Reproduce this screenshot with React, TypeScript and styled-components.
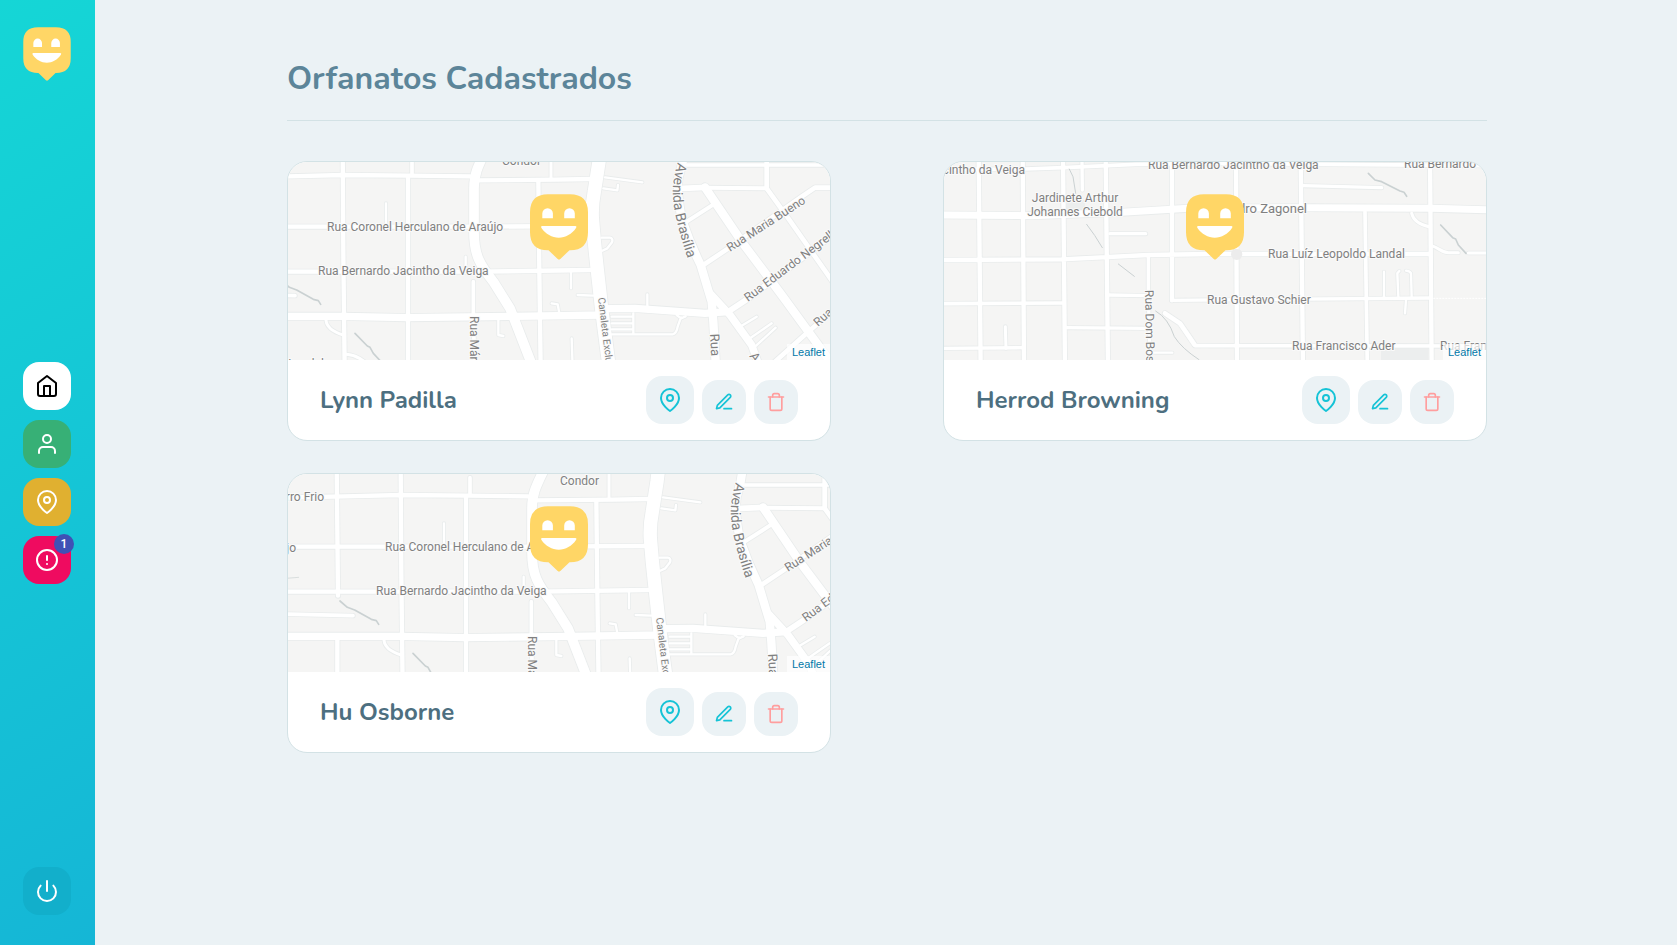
import React from 'react';
import styled, { createGlobalStyle } from 'styled-components';
import {
  FiAlertCircle,
  FiEdit3,
  FiHome,
  FiMapPin,
  FiPower,
  FiTrash,
  FiUser,
} from 'react-icons/fi';

const GlobalStyle = createGlobalStyle`
  * {
    margin: 0;
    padding: 0;
    box-sizing: border-box;
  }

  body {
    background: #ebf2f5;
    color: #4d6f80;
    font-family: Nunito, Lato, 'Open Sans', sans-serif;
  }

  button {
    font: inherit;
    border: 0;
    cursor: pointer;
  }
`;

const Sidebar = styled.aside`
  position: fixed;
  top: 0;
  bottom: 0;
  left: 0;
  width: 95px;
  padding: 27px 24px 30px 23px;
  display: flex;
  flex-direction: column;
  justify-content: space-between;
  background: linear-gradient(329.54deg, #15b6d6 0%, #15d6d6 100%);
`;

const LogoLink = styled.a`
  display: block;
  height: 52px;
`;

const Nav = styled.nav`
  display: flex;
  flex-direction: column;
  gap: 10px;
`;

const NavButton = styled.button<{ $background: string; $color?: string }>`
  position: relative;
  width: 48px;
  height: 48px;
  display: flex;
  align-items: center;
  justify-content: center;
  border-radius: 16px;
  background: ${({ $background }) => $background};
  color: ${({ $color }) => $color ?? '#fff'};
`;

const Badge = styled.span`
  position: absolute;
  top: -2px;
  right: -3px;
  width: 20px;
  height: 20px;
  border-radius: 10px;
  background: #3f51b5;
  color: #fff;
  font: 500 12px/20px Roboto, sans-serif;
  text-align: center;
`;

const Main = styled.main`
  margin-left: 97px;
  padding: 56px 24px 32px;
`;

const Content = styled.div`
  max-width: 1200px;
  margin: 0 auto;
`;

const PageTitle = styled.h1`
  padding-bottom: 18px;
  margin-bottom: 40px;
  border-bottom: 1px solid #d3e2e5;
  color: #5c8599;
  font-size: 32px;
  line-height: 46px;
  font-weight: 700;
`;

const CardGrid = styled.div`
  display: grid;
  grid-template-columns: 1fr 1fr;
  gap: 32px 112px;
`;

const Card = styled.article`
  overflow: hidden;
  border: 1px solid #d3e2e5;
  border-radius: 20px;
  background: #fff;
`;

const MapFrame = styled.div`
  position: relative;
  height: 198px;
  background: #f5f5f4;
`;

const MapDrawing = styled.svg`
  display: block;
  width: 100%;
  height: 100%;

  text {
    font-family: Roboto, sans-serif;
    fill: #808080;
    stroke: #fafafa;
    stroke-width: 2px;
    paint-order: stroke;
  }
`;

const Pin = styled.div`
  position: absolute;
  top: 32px;
  left: 50%;
  width: 58px;
  height: 66px;
  transform: translateX(-50%);
`;

const Attribution = styled.a`
  position: absolute;
  right: 0;
  bottom: 0;
  padding: 0 5px;
  background: rgba(255, 255, 255, 0.7);
  color: #0078a8;
  font: 11px/16px 'Liberation Sans', Arial, sans-serif;
  text-decoration: none;
`;

const CardFooter = styled.footer`
  height: 80px;
  padding: 0 32px;
  display: flex;
  align-items: center;
  justify-content: space-between;
`;

const CardName = styled.h2`
  color: #4d6f80;
  font-size: 24px;
  line-height: 32px;
  font-weight: 700;
`;

const Actions = styled.div`
  display: flex;
  align-items: flex-end;
  gap: 8px;
`;

const ActionButton = styled.button<{ $size: number; $color: string }>`
  width: ${({ $size }) => $size}px;
  height: ${({ $size }) => $size}px;
  display: flex;
  align-items: center;
  justify-content: center;
  border-radius: 16px;
  background: #ebf2f5;
  color: ${({ $color }) => $color};
`;

function HappyMark({ width, height }: { width: number; height: number }) {
  return (
    <svg width={width} height={height} viewBox="0 0 58 66" aria-hidden="true">
      <path
        fill="#ffd666"
        d="M18 0.200H40Q58 0.200 58 18.200V38.200Q58 56.200 40 56.200H39.500L30.300 65Q29 66.200 27.700 65L18.500 56.200H18Q0 56.200 0 38.200V18.200Q0 0.200 18 0.200Z"
      />
      <path
        fill="#fff"
        d="M12.300 24.300V19.500a5.300 5.300 0 0 1 10.600 0V24.300ZM34.200 24.300V19.500a5.300 5.300 0 0 1 10.600 0V24.300ZM12.200 31.900H45.300Q47.100 32 46 34C42 40 35.500 43.700 28.800 43.700S15.500 40 11.500 34Q10.400 32 12.200 31.900Z"
      />
    </svg>
  );
}

interface Road {
  w: number;
  d: string;
}

interface Label {
  x: number;
  y: number;
  text: string;
  size?: number;
  rotate?: number;
  anchor?: 'start' | 'middle' | 'end';
}

/* Roads are plotted at three units to a pixel. */
const MAP_SCALE = 1 / 3;

const bigorrilhoRoads: Road[] = [
  { w: 7, d: 'M318 145V205M557 305V345M655 495V540L670 543M815 445L833 448L838 475M875 550L878 640M873 350V400M893 420L940 422' },
  { w: 7, d: 'M975 67L1087 82M970 100L1012 106L1014 90M965 248H990Q1000 250 996 262L982 280L965 288M1102 418V460' },
  { w: 7, d: 'M995 485H1057M995 505H1057M995 523H1057M1060 475V538M995 538H1178Q1190 535 1193 515L1203 487M1190 480L1203 490L1217 484' },
  { w: 7, d: 'M1380 515L1430 485M1410 550L1475 505M1425 575L1487 518' },
  { w: 9, d: 'M138 495Q140 525 190 540M200 598Q230 600 260 625M813 -30V68' },
  { w: 11, d: 'M-174 417L45 422M396 8V60M580 380V480L584 640M1220 30H1690' },
  { w: 13, d: 'M-174 68L20 64L190 60L390 62L570 64M590 76L825 74L930 72' },
  { w: 13, d: 'M-174 215H582L920 213M-174 350H600L930 345' },
  { w: 13, d: 'M188 -30L190 300L194 640M384 64V640M-4 -30L0 362M-2 484V640M775 76L778 350L782 640' },
  { w: 12, d: 'M1275 98L1460 100M1220 200L1295 152' },
  { w: 14, d: 'M1460 -30V100L1525 190L1665 390L1700 440M1270 330L1345 280L1565 125L1605 98H1690M1485 620L1585 530L1690 440' },
  { w: 17, d: 'M1345 470L1405 430L1565 310L1690 215M1210 100L1275 97' },
  { w: 22, d: 'M-174 484H190L380 488L700 484L970 480M970 461L1065 460L1275 475L1345 470M1290 415L1350 480L1415 570L1440 640' },
  { w: 25, d: 'M1216 -30L1208 20L1195 70Q1190 130 1208 200Q1230 265 1262 330L1295 440L1300 500L1308 640M1275 97L1385 260L1505 420L1640 605' },
  { w: 29, d: 'M625 -30C590 40 582 60 582 100V230C582 300 600 330 640 380L690 460L760 640' },
  { w: 40, d: 'M963 -30L957 20L943 110Q935 150 937 190L943 260L952 345L966 470L988 640' },
];

const bigorrilhoStreams: Road[] = [
  { w: 5, d: 'M6 378L28 397L50 405L100 433L115 437L122 448M225 535L262 573L270 577L280 595L305 622' },
  { w: 2, d: 'M-156 310L-118 307' },
];

const bigorrilhoLabels: Label[] = [
  { x: 39, y: 69, text: 'Rua Coronel Herculano de Araújo' },
  { x: 30, y: 113, text: 'Rua Bernardo Jacintho da Veiga' },
  { x: 214, y: 3, text: 'Condor' },
  { x: 182, y: 154, text: 'Rua Márcia', rotate: 90 },
  { x: 310, y: 136, text: 'Canaleta Exclusiva', size: 10, rotate: 83 },
  { x: 442, y: 90, text: 'Rua Maria Bueno', rotate: -33 },
  { x: 460, y: 140, text: 'Rua Eduardo Negrelli', rotate: -37 },
  { x: 530, y: 165, text: 'Rua', rotate: -42 },
  { x: 422, y: 172, text: 'Rua', size: 13, rotate: 87 },
  { x: 461, y: 194, text: 'A', size: 13, rotate: 55 },
  { x: 36, y: 206, text: 'Landal', anchor: 'end' },
  { x: -22, y: 19, text: 'Cerro Frio', anchor: 'end' },
  { x: -50, y: 70, text: 'Araújo', anchor: 'end' },
];

const vistaAlegreRoads: Road[] = [
  { w: 7, d: 'M1347 350V425M1390 425L1387 355L1393 348M1430 425L1428 355Q1425 348 1413 347M1413 435L1410 475M655 593H712' },
  { w: 9, d: 'M211 515L213 580M1430 175Q1437 205 1482 215M1490 272C1515 280 1520 293 1540 293H1570M1600 294H1670' },
  { w: 10, d: 'M525 236H632M1105 92L1340 98M441 20L442 105M20 580L265 578M395 518L640 520M520 420L640 422M640 300V420L646 640M710 436L1485 429' },
  { w: 11, d: 'M20 44L270 42L385 38L600 28L840 25L1670 32M20 446L385 444M780 572L1670 573M1290 170L1297 640' },
  { w: 13, d: 'M131 0L137 640M263 0L267 640M384 0L390 640M512 0L519 640M711 0V436M903 0L906 640M1097 0L1104 640M1485 0L1490 640M20 315L380 313L640 300L825 297L1485 297' },
  { w: 14, d: 'M690 475L735 505L778 568' },
  { w: 21, d: 'M20 180L290 182L560 172L760 160L1115 158L1490 160L1670 165' },
];

const vistaAlegreStreams: Road[] = [
  { w: 3, d: 'M403 42Q418 65 418 90L422 115M455 208Q480 240 502 278M550 327L598 364M662 468Q700 490 718 545Q740 580 792 614' },
  { w: 5, d: 'M1300 55L1320 75L1340 80L1395 108L1407 112L1415 124M1517 210L1553 248L1562 252L1570 270L1593 295' },
];

const vistaAlegreLabels: Label[] = [
  { x: 81, y: 12, text: 'Rua Bernardo Jacintho da Veiga', anchor: 'end' },
  { x: 131, y: 40, text: 'Jardinete Arthur', anchor: 'middle' },
  { x: 131, y: 54, text: 'Johannes Ciebold', anchor: 'middle' },
  { x: 204, y: 7, text: 'Rua Bernardo Jacintho da Veiga' },
  { x: 460, y: 6, text: 'Rua Bernardo' },
  { x: 363, y: 51, text: 'Rua Pedro Zagonel', size: 13, anchor: 'end' },
  { x: 324, y: 96, text: 'Rua Luíz Leopoldo Landal' },
  { x: 263, y: 142, text: 'Rua Gustavo Schier' },
  { x: 348, y: 188, text: 'Rua Francisco Ader' },
  { x: 496, y: 188, text: 'Rua Francisco' },
  { x: 201, y: 128, text: 'Rua Dom Bosco', rotate: 89 },
];

function RoadLayer({ roads, streams }: { roads: Road[]; streams: Road[] }) {
  return (
    <g fill="none" strokeLinecap="round" strokeLinejoin="round">
      {roads.map((road) => (
        <path key={road.d} d={road.d} stroke="#e9ecec" strokeWidth={road.w + 5} />
      ))}
      {roads.map((road) => (
        <path key={road.d} d={road.d} stroke="#fff" strokeWidth={road.w} />
      ))}
      {streams.map((stream) => (
        <path key={stream.d} d={stream.d} stroke="#cad1d2" strokeWidth={stream.w} />
      ))}
    </g>
  );
}

function LabelLayer({ labels }: { labels: Label[] }) {
  return (
    <>
      {labels.map(({ x, y, text, size = 12, rotate = 0, anchor = 'start' }) => (
        <text
          key={`${text}-${x}`}
          fontSize={size}
          textAnchor={anchor}
          transform={`translate(${x} ${y}) rotate(${rotate})`}
        >
          {text}
        </text>
      ))}
    </>
  );
}

function BigorrilhoMap({ id, shiftX = 0, shiftY = 0 }: { id: string; shiftX?: number; shiftY?: number }) {
  const avenue = `${id}-avenue`;
  return (
    <MapDrawing viewBox="0 0 542 198" preserveAspectRatio="xMidYMid slice" role="img" aria-label="Mapa">
      <g transform={`translate(${shiftX} ${shiftY})`}>
        <g transform={`translate(-8 -7) scale(${MAP_SCALE})`}>
          <RoadLayer roads={bigorrilhoRoads} streams={bigorrilhoStreams} />
        </g>
        <LabelLayer labels={bigorrilhoLabels} />
        <path id={avenue} fill="none" d="M390 0Q384 20 385 34Q386 60 406 114" />
        <text fontSize="14">
          <textPath href={`#${avenue}`}>Avenida Brasília</textPath>
        </text>
      </g>
    </MapDrawing>
  );
}

function VistaAlegreMap() {
  return (
    <MapDrawing viewBox="0 0 542 198" preserveAspectRatio="xMidYMid slice" role="img" aria-label="Mapa">
      <g transform={`translate(-9 -7) scale(${MAP_SCALE})`}>
        <path fill="#eceeee" d="M392 135H450V165H392ZM1338 580H1480V640H1338Z" />
        <RoadLayer roads={vistaAlegreRoads} streams={vistaAlegreStreams} />
        <path d="M1495 430H1670" stroke="#fff" strokeWidth="3" strokeDasharray="6 3" />
        <circle cx="905" cy="298" r="17" fill="#ececec" />
      </g>
      <LabelLayer labels={vistaAlegreLabels} />
    </MapDrawing>
  );
}

const orphanages = [
  { name: 'Lynn Padilla', map: <BigorrilhoMap id="lynn" /> },
  { name: 'Herrod Browning', map: <VistaAlegreMap /> },
  { name: 'Hu Osborne', map: <BigorrilhoMap id="hu" shiftX={58} shiftY={8} /> },
];

export default function App() {
  return (
    <>
      <GlobalStyle />
      <Sidebar>
        <LogoLink href="#" aria-label="Happy">
          <HappyMark width={48} height={54} />
        </LogoLink>
        <Nav>
          <NavButton type="button" aria-label="Início" $background="#fff" $color="#000">
            <FiHome size={24} />
          </NavButton>
          <NavButton type="button" aria-label="Usuário" $background="#37b076">
            <FiUser size={24} />
          </NavButton>
          <NavButton type="button" aria-label="Orfanatos" $background="#e0b030">
            <FiMapPin size={24} />
          </NavButton>
          <NavButton type="button" aria-label="Pendentes" $background="#ef0b60">
            <FiAlertCircle size={24} />
            <Badge>1</Badge>
          </NavButton>
        </Nav>
        <NavButton type="button" aria-label="Sair" $background="#12afcb">
          <FiPower size={24} />
        </NavButton>
      </Sidebar>
      <Main>
        <Content>
          <PageTitle>Orfanatos Cadastrados</PageTitle>
          <CardGrid>
            {orphanages.map(({ name, map }) => (
              <Card key={name}>
                <MapFrame>
                  {map}
                  <Pin>
                    <HappyMark width={58} height={66} />
                  </Pin>
                  <Attribution href="#">Leaflet</Attribution>
                </MapFrame>
                <CardFooter>
                  <CardName>{name}</CardName>
                  <Actions>
                    <ActionButton type="button" aria-label={`Ver ${name}`} $size={48} $color="#15c3d6">
                      <FiMapPin size={24} />
                    </ActionButton>
                    <ActionButton type="button" aria-label={`Editar ${name}`} $size={44} $color="#15c3d6">
                      <FiEdit3 size={20} />
                    </ActionButton>
                    <ActionButton type="button" aria-label={`Excluir ${name}`} $size={44} $color="#ff9e9e">
                      <FiTrash size={20} />
                    </ActionButton>
                  </Actions>
                </CardFooter>
              </Card>
            ))}
          </CardGrid>
        </Content>
      </Main>
    </>
  );
}
